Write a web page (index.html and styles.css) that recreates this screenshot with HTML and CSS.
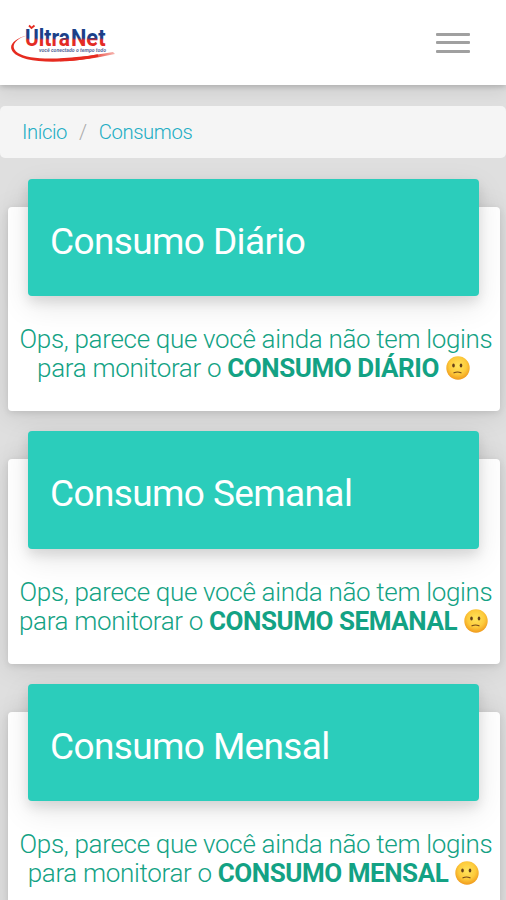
FILE: index.html
```html
<!DOCTYPE html>
<html lang="pt-BR">
<head>
<meta charset="utf-8">
<meta name="viewport" content="width=device-width, initial-scale=1">
<title>Consumos</title>
<link rel="stylesheet" href="styles.css">
</head>
<body>
<svg class="defs" width="0" height="0" aria-hidden="true">
  <defs>
    <radialGradient id="skin" cx=".5" cy=".4" r=".6">
      <stop offset="0" stop-color="#ffe45c"/>
      <stop offset=".6" stop-color="#fdcb3c"/>
      <stop offset="1" stop-color="#f09a1c"/>
    </radialGradient>
    <symbol id="face" viewBox="0 0 24 24">
      <circle cx="12" cy="12" r="11.7" fill="url(#skin)"/>
      <ellipse cx="7.500" cy="9.500" rx="1.300" ry="1.900" fill="#65401a"/>
      <ellipse cx="15" cy="9.500" rx="1.300" ry="1.900" fill="#65401a"/>
      <path d="M8 16.800Q11.500 15.200 15 16.800" fill="none" stroke="#74471a" stroke-width="1.200" stroke-linecap="round"/>
    </symbol>
  </defs>
</svg>
<header class="navbar">
  <svg class="logo" width="108" height="42" viewBox="10 21 108 42" role="img" aria-label="UltraNet">
    <defs>
      <linearGradient id="word" x1="0" y1="0" x2="0" y2="1">
        <stop offset=".48" stop-color="#1d3f88"/>
        <stop offset=".56" stop-color="#e32b25"/>
      </linearGradient>
      <linearGradient id="tail" x1="0" y1="0" x2="1" y2="0">
        <stop offset=".75" stop-color="#e62b20"/>
        <stop offset="1" stop-color="#f6b8b2"/>
      </linearGradient>
    </defs>
    <path d="M27 34.5C13 38 8 45 13 51C22 62 61 65 115 53L113 51C68 59 31 60 18 52C9 46 15 38 27 34.5Z" fill="url(#tail)"/>
    <path d="M60 59Q80 58.500 98 54.500" stroke="#e62b20" stroke-width="2.500" fill="none"/>
    <path d="M29 24.500L31.500 27L34.500 24.500" fill="none" stroke="#e62b20" stroke-width="1.800"/>
    <text class="logo-word" x="25" y="45" textLength="45" lengthAdjust="spacingAndGlyphs" fill="url(#word)">Ultra</text>
    <text class="logo-word" x="71" y="45" textLength="34.500" lengthAdjust="spacingAndGlyphs" fill="url(#word)">Net</text>
    <text class="logo-tag" x="39" y="50.500" textLength="67" lengthAdjust="spacingAndGlyphs">você conectado o tempo todo</text>
  </svg>
  <div class="toggler"><span></span><span></span><span></span></div>
</header>
<main>
  <nav class="breadcrumb"><a>Início</a><span class="sep">/</span><a>Consumos</a></nav>
  <section class="card">
    <h4 class="card-header">Consumo Diário</h4>
    <p class="card-text">Ops, parece que você ainda não tem logins<br>para monitorar o <b>CONSUMO DIÁRIO</b> <svg class="emoji"><use href="#face"/></svg></p>
  </section>
  <section class="card tall">
    <h4 class="card-header">Consumo Semanal</h4>
    <p class="card-text">Ops, parece que você ainda não tem logins<br>para monitorar o <b>CONSUMO SEMANAL</b> <svg class="emoji"><use href="#face"/></svg></p>
  </section>
  <section class="card">
    <h4 class="card-header">Consumo Mensal</h4>
    <p class="card-text">Ops, parece que você ainda não tem logins<br>para monitorar o <b>CONSUMO MENSAL</b> <svg class="emoji"><use href="#face"/></svg></p>
  </section>
</main>
</body>
</html>
```
FILE: styles.css
```css
* { box-sizing: border-box; }
html { overflow: hidden; }
body {
  margin: 0;
  height: 900px;
  overflow: hidden;
  background: #dfdfdf;
  font-family: Roboto, "Liberation Sans", sans-serif;
  font-weight: 300;
}
.defs { position: absolute; }
.navbar {
  height: 85px;
  padding: 0 36px 0 10px;
  display: flex;
  align-items: center;
  justify-content: space-between;
  background: #fff;
  box-shadow: 0 2px 5px rgba(0,0,0,.16), 0 4px 18px rgba(0,0,0,.1);
}
.logo-word { font: 700 23px Roboto, sans-serif; }
.logo-tag { font: italic 700 4.5px Roboto, sans-serif; fill: #5c6d9d; }
.toggler { width: 34px; display: grid; gap: 5.5px; }
.toggler span { height: 3px; background: #a0a0a0; border-radius: 1px; }
.breadcrumb {
  height: 52px;
  margin-top: 21px;
  padding: 0 22px;
  display: flex;
  align-items: center;
  gap: 12px;
  background: #f5f5f5;
  border-radius: 5px;
  color: #22adc4;
  font-size: 20.3px;
  letter-spacing: -.4px;
}
.sep { color: #aaa; }
.card {
  height: 204px;
  margin: 49px 6px 0 8px;
  padding: 0 21px;
  background: #fff;
  border-radius: 4px;
  box-shadow: 0 2px 6px rgba(0,0,0,.1), 0 4px 28px rgba(0,0,0,.1);
}
.card + .card { margin-top: 48px; }
.card.tall { height: 205px; }
.card-header {
  position: relative;
  top: -28px;
  height: 117px;
  margin: 0 0 0 -1px;
  width: 451px;
  padding: 7px 22px 0;
  display: flex;
  align-items: center;
  border-radius: 4px;
  background: #2bcdbb;
  box-shadow: 0 6px 12px rgba(0,0,0,.1), 0 10px 30px rgba(0,0,0,.1);
  color: #fff;
  font-size: 37px;
  font-weight: 400;
  letter-spacing: -.62px;
}
.tall .card-header { height: 118px; }
.card-text {
  margin: 1px -22px 0 -18px;
  text-align: center;
  white-space: nowrap;
  font-size: 26px;
  letter-spacing: -.32px;
  line-height: 29px;
  color: #13a284;
}
.card-text b { font-weight: 700; letter-spacing: -.45px; }
.emoji { width: 24px; height: 24px; margin: 0 5px 0 1px; vertical-align: -3px; }
```
